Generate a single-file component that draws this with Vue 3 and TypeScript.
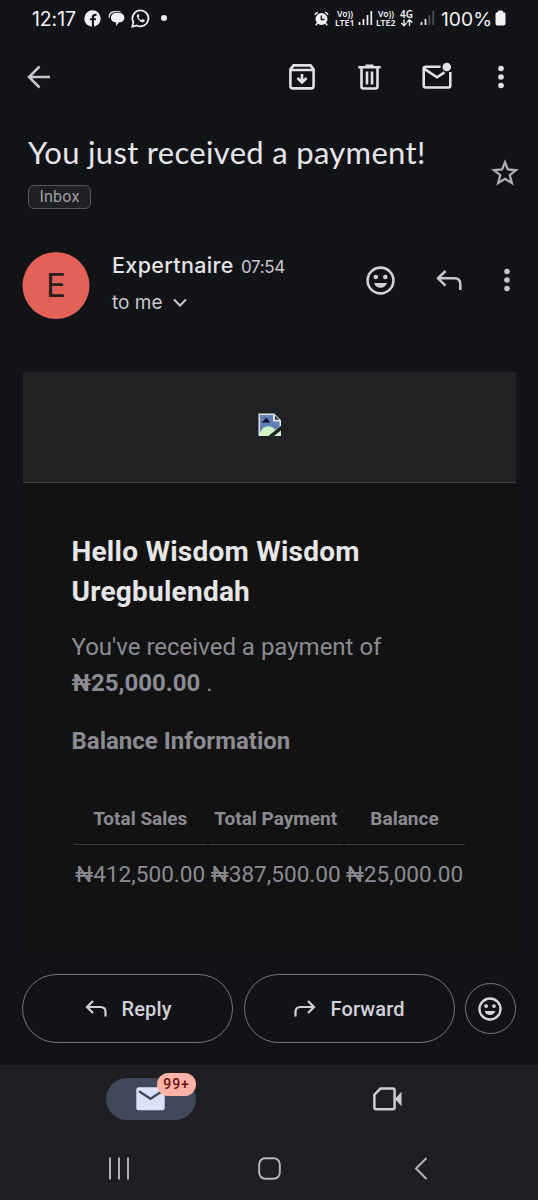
<script setup lang="ts">
interface Column {
  title: string
  amount: string
}

const columns: Column[] = [
  { title: 'Total Sales', amount: '₦412,500.00' },
  { title: 'Total Payment', amount: '₦387,500.00' },
  { title: 'Balance', amount: '₦25,000.00' },
]
</script>

<template>
  <div class="screen">
    <header class="status">
      <span class="clock">12:17</span>
      <svg class="fb" width="17" height="17" viewBox="0 0 17 17">
        <circle cx="8.5" cy="8.5" r="8.2" fill="#f1f1f3" />
        <path d="M8.9 17V7.4c0-1.7.8-2.7 2.8-2.7h.8M6 9.3h6" fill="none" stroke="#121317" stroke-width="2.1" />
      </svg>
      <svg class="msg" width="17" height="17" viewBox="0 0 17 17">
        <path d="M1 8.5C-.2 4 2.500 1.100 6 1.100h4.500c1.300 0 2.200.4 2.900 1.100H7.500C4.200 2.200 1.900 4.500 1.900 7.500z" fill="#d5d5d9" />
        <path d="M7.500 3.100h4.300a4.600 4.600 0 0 1 0 9.200h-.9L8 16.300v-4h-.5a4.600 4.600 0 0 1 0-9.200z" fill="#f1f1f3" />
      </svg>
      <svg class="wa" width="19" height="19" viewBox="0 0 19 19">
        <path d="M1.300 17.700l1.100-4.500a8 8 0 1 1 3.200 3.200z" fill="none" stroke="#f1f1f3" stroke-width="1.700" />
        <path d="M6.800 5.300c-1.400.8-1.200 2.700.2 4.600 1.700 2.400 4 3.800 5.600 3.100 1-.5 1.300-1.200 1.100-1.900l-2.100-1.100-1.200 1.200c-1.300-.5-2.300-1.500-2.900-2.800l.9-1.200-.8-1.900z" fill="#f1f1f3" />
      </svg>
      <span class="dot"></span>

      <svg class="alarm" width="15" height="15" viewBox="0 0 15 15">
        <circle cx="7.500" cy="8" r="6" fill="#f1f1f3" />
        <path d="M.8 3.800L3.700 1M14.200 3.800L11.300 1M3.300 12.300l-1.500 1.900M11.700 12.300l1.500 1.900" stroke="#f1f1f3" stroke-width="1.500" />
        <path d="M7.300 4.500v4h3.200" fill="none" stroke="#121317" stroke-width="1.300" />
      </svg>
      <svg class="tiny" width="20" height="17" viewBox="0 0 20 17">
        <text x="2" y="7" textLength="16" lengthAdjust="spacingAndGlyphs">Vo))</text>
        <text x="0" y="16" textLength="19.500" lengthAdjust="spacingAndGlyphs">LTE1</text>
      </svg>
      <svg class="bars" width="15" height="16" viewBox="0 0 15 16" stroke="#f1f1f3" stroke-width="1.700">
        <path d="M1.500 15v-3M5.500 15V9M9.500 15V5M13.300 15V1" />
      </svg>
      <svg class="tiny second" width="20" height="17" viewBox="0 0 20 17">
        <text x="2" y="7" textLength="16" lengthAdjust="spacingAndGlyphs">Vo))</text>
        <text x="0" y="16" textLength="19.500" lengthAdjust="spacingAndGlyphs">LTE2</text>
      </svg>
      <svg class="tiny data" width="14" height="17" viewBox="0 0 14 17">
        <text x="0" y="7.500" class="big" textLength="13" lengthAdjust="spacingAndGlyphs">4G</text>
        <path d="M4 9.500v6M1.300 13L4 15.700 6.500 13M9.500 16v-6M7 12.500l2.500-2.700 2.700 2.700" fill="none" stroke="#f1f1f3" stroke-width="1.300" />
      </svg>
      <svg class="bars third" width="15" height="16" viewBox="0 0 15 16" stroke="#f1f1f3" stroke-width="1.700">
        <path d="M1.500 15v-3M5.500 15V9" />
        <path d="M9.500 15V5M13.300 15V1" stroke="#515257" />
      </svg>
      <span class="percent">100%</span>
      <svg class="battery" width="11" height="16" viewBox="0 0 11 16">
        <path d="M3 1.500Q3 .5 4 .5h3q1 0 1 1v.700h.8q1.700 0 1.700 1.700v9.600q0 2-2 2H2.500q-2 0-2-2V3.900Q.5 2.200 2.200 2.200H3z" fill="#f1f1f3" />
      </svg>
    </header>

    <nav class="toolbar">
      <svg class="back" width="24" height="24" viewBox="0 0 24 24">
        <path d="M23 12H2.500M12.500 1.500L2 12l10.500 10.500" fill="none" stroke="#cac5d2" stroke-width="2.500" />
      </svg>
      <svg class="archive" width="26" height="26" viewBox="0 0 26 26" fill="none" stroke="#e3e1e8" stroke-width="2.600">
        <path d="M1.400 5.400L4.500 1.400h17l3.100 4v16.700q0 2.300-2.300 2.300H3.700q-2.300 0-2.300-2.300zM1.400 6h23.200" />
        <path d="M13 10v8M8.500 14L13 18.500l4.500-4.500" />
      </svg>
      <svg class="trash" width="23" height="26" viewBox="0 0 23 26" fill="none" stroke="#e3e1e8" stroke-width="2.600">
        <path d="M.3 3.300h22.400M7.500 1.800h8M3.500 3.500v19q0 2 2 2h12q2 0 2-2v-19M9 7.500v13M14 7.500v13" />
      </svg>
      <svg class="unread" width="30" height="28" viewBox="0 0 30 28">
        <path d="M18.500 4.700H3.600Q1.700 4.700 1.700 6.600v17q0 1.900 1.900 1.900h22.800q1.900 0 1.900-1.900V10M2 6.700l13 8.600 7.500-5" fill="none" stroke="#e3e1e8" stroke-width="2.600" />
        <circle cx="24.800" cy="5" r="4.300" fill="#e3e1e8" />
      </svg>
      <svg class="more" width="6" height="24" viewBox="0 0 6 24" fill="#e3e1e8">
        <circle cx="3" cy="3.500" r="2.800" /><circle cx="3" cy="12" r="2.800" /><circle cx="3" cy="20.500" r="2.800" />
      </svg>
    </nav>

    <section class="subject">
      <div class="subject-main">
        <h1>You just received a payment!</h1>
        <span class="label">Inbox</span>
      </div>
      <svg class="star" width="28" height="27" viewBox="0 0 28 27">
        <path d="M14 3.300l2.900 7.200 8 .6-6.100 5.100 2 7.900-6.800-4.300-6.800 4.300 2-7.900-6.100-5.100 8-.6z" fill="none" stroke="#aeadb3" stroke-width="2.300" />
      </svg>
    </section>

    <section class="sender">
      <div class="avatar">E</div>
      <div class="who">
        <div class="line"><span class="name">Expertnaire</span><span class="time">07:54</span></div>
        <div class="line to">
          <span class="me">to me</span>
          <svg width="14" height="10" viewBox="0 0 14 10"><path d="M1 1.500l6 6 6-6" fill="none" stroke="#c9c7ce" stroke-width="2" /></svg>
        </div>
      </div>
      <svg class="smile" width="29" height="29" viewBox="0 0 29 29">
        <circle cx="14.500" cy="14.500" r="12.900" fill="none" stroke="#d3d0d8" stroke-width="2.600" />
        <circle cx="9.800" cy="11" r="2.300" fill="#d3d0d8" /><circle cx="19.300" cy="11" r="2.300" fill="#d3d0d8" />
        <path d="M8 17h13q-1.700 4.700-6.500 4.700T8 17z" fill="#d3d0d8" />
      </svg>
      <svg class="reply" width="26" height="20" viewBox="0 0 26 20">
        <path d="M9.500 1L2 8.300l7.500 7.300M2 8.300h16.500q5.800 0 5.800 6V20" fill="none" stroke="#c9c5d0" stroke-width="2.500" />
      </svg>
      <svg class="sender-more" width="6" height="24" viewBox="0 0 6 24" fill="#c9c5d0">
        <circle cx="3" cy="3.500" r="2.800" /><circle cx="3" cy="12" r="2.800" /><circle cx="3" cy="20.500" r="2.800" />
      </svg>
    </section>

    <article class="mail">
      <div class="banner">
        <svg width="24" height="24" viewBox="0 0 24 24">
          <path d="M.5.500h15.700l6.800 6.800V23H.5z" fill="#dfe4ea" />
          <path d="M2 2h13v6.500h6.500v13H2z" fill="#5f80b4" />
          <path d="M2 19.500Q5 13.300 10.500 13.300q4 0 6.300 3.500L22 14v8.800H2z" fill="#d2f5c6" />
          <path d="M3.600 9.400q.6-1.700 2.200-1.700Q6.600 5 8.300 5q1.600 0 2 2.500 1.600 0 1.700 1.900z" fill="#0c1727" />
          <path d="M17 2.500v4.300h4.300z" fill="#33383e" />
          <path d="M24 12L9.500 23.800h5.700L24 16.500z" fill="#202122" />
        </svg>
      </div>
      <div class="content">
        <h2>Hello Wisdom Wisdom<br />Uregbulendah</h2>
        <p>You've received a payment of<br /><b>₦25,000.00</b> .</p>
        <h3>Balance Information</h3>
        <div class="table">
          <div v-for="c in columns" :key="c.title" class="column">
            <div class="th">{{ c.title }}</div>
            <div class="td">{{ c.amount }}</div>
          </div>
        </div>
      </div>
    </article>

    <section class="actions">
      <button class="pill">
        <svg width="22" height="17" viewBox="0 0 22 17"><path d="M8 1L2 7l6 6M2 7h13.500q5 0 5 5v4.500" fill="none" stroke="#d3d1d8" stroke-width="2.200" /></svg>
        <span>Reply</span>
      </button>
      <button class="pill forward">
        <svg width="22" height="17" viewBox="0 0 22 17"><path d="M14 1l6 6-6 6M20 7H6.500q-5 0-5 5v4.500" fill="none" stroke="#d3d1d8" stroke-width="2.200" /></svg>
        <span>Forward</span>
      </button>
      <button class="round">
        <svg width="24" height="24" viewBox="0 0 29 29">
          <circle cx="14.500" cy="14.500" r="12.700" fill="none" stroke="#d9d7de" stroke-width="2.800" />
          <circle cx="9.800" cy="11" r="2.300" fill="#d9d7de" /><circle cx="19.300" cy="11" r="2.300" fill="#d9d7de" />
          <path d="M8 17h13q-1.700 4.700-6.500 4.700T8 17z" fill="#d9d7de" />
        </svg>
      </button>
    </section>

    <footer class="bottom">
      <div class="tabs">
        <div class="tab active">
          <svg width="29" height="24" viewBox="0 0 29 24">
            <rect x=".3" y=".3" width="28.400" height="23" rx="2.500" fill="#dde2fb" />
            <path d="M3 4.300l11.500 7.500L26 4.300" fill="none" stroke="#41485a" stroke-width="2.300" />
          </svg>
          <span class="badge">99+</span>
        </div>
        <svg class="video" width="29" height="24" viewBox="0 0 29 24">
          <path d="M7.500 1.600h12.300q1.800 0 1.800 1.800v17q0 1.800-1.800 1.800H3.200q-1.800 0-1.800-1.800V7.700z" fill="none" stroke="#cfccd3" stroke-width="2.500" />
          <path d="M22 12l6.500-7.300v14.600z" fill="#cfccd3" />
        </svg>
      </div>
      <div class="system">
        <svg class="recents" width="22" height="23" viewBox="0 0 22 23"><path d="M2 .5v22M11 .5v22M20 .5v22" stroke="#b9b8bc" stroke-width="1.900" /></svg>
        <svg class="home" width="23" height="23" viewBox="0 0 23 23"><rect x="1.200" y="1.200" width="20.600" height="20.600" rx="6" fill="none" stroke="#b9b8bc" stroke-width="1.900" /></svg>
        <svg class="prev" width="14" height="23" viewBox="0 0 14 23"><path d="M12.500 1L2 11.500 12.500 22" fill="none" stroke="#b9b8bc" stroke-width="1.900" /></svg>
      </div>
    </footer>
  </div>
</template>

<style>
body {
  background: #121317;
}
</style>

<style scoped>
* {
  box-sizing: border-box;
}
svg {
  display: block;
  flex: none;
  overflow: visible;
}
.screen {
  width: 538px;
  height: 1200px;
  overflow: hidden;
  display: flex;
  flex-direction: column;
  background: #121317;
  color: #e3e2e6;
  font-family: Roboto, "Noto Sans", sans-serif;
  white-space: nowrap;
}
.status {
  height: 36px;
  flex: none;
  display: flex;
  align-items: center;
  padding-left: 32px;
  color: #f1f1f3;
}
.clock {
  width: 52px;
  padding-top: 1px;
  font: 400 19.500px/22px Inter, sans-serif;
  letter-spacing: -0.100px;
}
.msg { margin-left: 7px; }
.wa { margin-left: 6px; }
.dot {
  width: 6px;
  height: 6px;
  margin-left: 11px;
  border-radius: 50%;
  background: #f1f1f3;
}
.alarm { margin-left: 147px; }
.tiny { margin-left: 6px; }
.tiny text {
  font: 600 9px "Noto Sans", sans-serif;
  fill: #f1f1f3;
}
.tiny text.big { font-size: 10px; }
.bars { margin-left: 3px; }
.tiny.second { margin-left: 3px; }
.tiny.data { margin-left: 4px; }
.bars.third { margin-left: 6px; }
.percent {
  width: 54px;
  margin-left: 6px;
  padding-top: 1px;
  font: 400 19.300px/22px Inter, sans-serif;
}
.toolbar {
  height: 82px;
  flex: none;
  display: flex;
  align-items: center;
  padding-left: 26.500px;
}
.archive { margin-left: 238px; }
.trash { margin-left: 43px; }
.unread { margin-left: 41px; margin-top: -2px; }
.more { margin-left: 46.500px; }
.subject {
  height: 122px;
  flex: none;
  display: flex;
  padding-left: 28px;
}
.subject-main { width: 463px; }
h1 {
  margin: 14px 0 0;
  font: 400 31px/40px Lato, sans-serif;
  letter-spacing: 0.320px;
  color: #e6e5ea;
}
.label {
  display: flex;
  align-items: center;
  justify-content: center;
  width: 63px;
  height: 24px;
  margin-top: 12.500px;
  border: 1.500px solid #56575c;
  border-radius: 6px;
  background: #1f2024;
  color: #a09fa5;
  font-size: 16px;
  letter-spacing: 0.200px;
}
.star { margin: 41px 0 0 -0.500px; }
.sender {
  height: 132px;
  flex: none;
  display: flex;
  align-items: flex-start;
  padding-left: 22px;
}
.avatar {
  width: 67px;
  height: 67px;
  margin-top: 11.500px;
  border-radius: 50%;
  background: #e26258;
  color: #2a1d20;
  text-align: center;
  font: 400 33px/67px Inter, sans-serif;
  transform: translateX(0.500px);
}
.who {
  width: 254px;
  padding: 9px 0 0 23px;
}
.line {
  display: flex;
  align-items: baseline;
  height: 36px;
  line-height: 32px;
}
.name {
  width: 129px;
  font: 500 21.500px/32px Inter, sans-serif;
  letter-spacing: 0.350px;
}
.time {
  font: 400 17px/32px Inter, sans-serif;
  letter-spacing: -0.350px;
  color: #c9c7ce;
}
.to { align-items: center; }
.me {
  width: 61px;
  font: 400 19px/32px Inter, sans-serif;
  color: #c9c7ce;
}
.smile { margin: 26px 0 0 23px; }
.reply { margin: 30px 0 0 40.500px; }
.sender-more { margin: 28px 0 0 42.500px; }
.mail {
  width: 493px;
  height: 580px;
  flex: none;
  margin-left: 22.500px;
  background: #121212;
}
.banner {
  height: 111px;
  padding: 41px 0 0 235px;
  background: #202122;
  border-bottom: 1.500px solid #3f4041;
}
.content {
  padding: 49px 49px 0;
  color: #8b8b91;
}
h2 {
  margin: 0;
  color: #e6e6e7;
  font: 700 28px/40px Roboto, sans-serif;
  letter-spacing: 0.240px;
}
p {
  margin: 17px 0 0;
  font-size: 24px;
  line-height: 36px;
}
h3 {
  margin: 22px 0 0;
  font: 700 24px/36px Roboto, sans-serif;
}
.table {
  display: grid;
  grid-template-columns: 133.500px 133.500px 120px;
  column-gap: 2px;
  margin: 41px 0 0 2px;
}
.column {
  display: flex;
  flex-direction: column;
  align-items: stretch;
  text-align: center;
}
.th {
  height: 45px;
  border-bottom: 1.500px solid #3a3a3c;
  font-size: 19px;
  font-weight: 700;
  line-height: 37px;
}
.td {
  font-size: 22.600px;
  line-height: 59px;
}
.actions {
  height: 113px;
  flex: none;
  display: flex;
  align-items: center;
  padding-left: 22px;
}
button {
  display: flex;
  align-items: center;
  flex: none;
  padding: 0;
  border: 1.500px solid #77767c;
  background: none;
  color: #d3d1d8;
}
.pill {
  width: 211px;
  height: 69px;
  margin-right: 10.500px;
  padding-left: 62px;
  border-radius: 35px;
  font: 500 20px/24px Roboto, sans-serif;
}
.pill.forward { padding-left: 49.500px; }
.pill span { margin-left: 14.500px; letter-spacing: 0.150px; }
.round {
  width: 50.500px;
  height: 50.500px;
  justify-content: center;
  border-radius: 50%;
}
.bottom {
  flex: 1;
  background: #1f1e23;
}
.tabs {
  height: 73px;
  display: flex;
  padding: 13px 0 0 106px;
}
.active {
  position: relative;
  width: 90px;
  height: 42px;
  padding: 9px 0 0 30px;
  border-radius: 21px;
  background: #41485a;
}
.badge {
  position: absolute;
  top: -5px;
  right: 0;
  width: 39px;
  height: 23px;
  border-radius: 12px;
  background: #ffb3a7;
  color: #6a0b08;
  text-align: center;
  font: 500 14px/23px Roboto, sans-serif;
  letter-spacing: 0.900px;
}
.video { margin: 9px 0 0 176.500px; }
.system {
  display: flex;
  align-items: center;
  height: 60px;
  padding-left: 108px;
}
.home { margin-left: 128px; }
.prev { margin-left: 132.500px; }
</style>
